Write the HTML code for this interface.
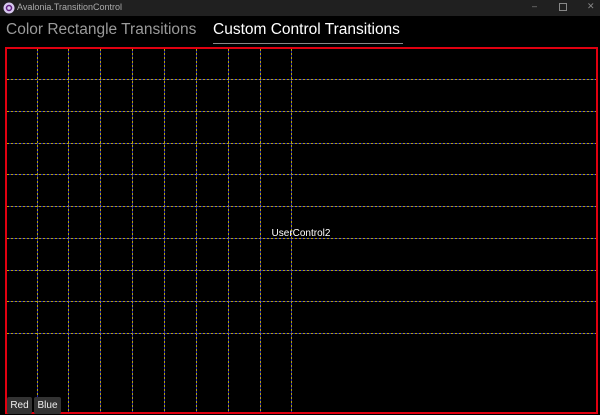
<!DOCTYPE html>
<html><head><style>
body{margin:0;width:600px;height:415px;background:#000;overflow:hidden;font-family:"Liberation Sans",sans-serif;position:relative}
.tb{position:absolute;left:0;top:0;width:600px;height:16px;background:#202020;color:#aaa;font-size:9px}
.tab{position:absolute;top:21px;font-size:15.5px;}
.btn{position:absolute;top:397px;height:17px;background:#333;color:#eee;font-size:10px;line-height:17px;text-align:center;border-radius:2px}
</style></head><body>
<div class="tb">
<svg width="12" height="12" style="position:absolute;left:3px;top:2px"><circle cx="6" cy="6" r="5.5" fill="#d8c8f0"/><circle cx="6" cy="6" r="2.5" fill="none" stroke="#602080" stroke-width="1.5"/></svg>
<span style="position:absolute;left:17px;top:2px">Avalonia.TransitionControl</span>
<span style="position:absolute;left:532px;top:1px;color:#888">–</span>
<span style="position:absolute;left:559px;top:3px;width:6px;height:6px;border:1px solid #888"></span>
<span style="position:absolute;left:587px;top:1px;color:#888">✕</span>
</div>
<div class="tab" style="left:6px;color:#9a9a9a">Color Rectangle Transitions</div>
<div class="tab" style="left:213px;color:#fff">Custom Control Transitions</div>
<div style="position:absolute;left:213px;top:43px;width:190px;height:1px;background:#888"></div>
<svg width="600" height="415" style="position:absolute;left:0;top:0">
<defs>
<path id="g" d="M37.5 49V413M68.5 49V413M100.5 49V413M132.5 49V413M164.5 49V413M196.5 49V413M228.5 49V413M260.5 49V413M291.5 49V413M7 79.5H597M7 111.5H597M7 143.5H597M7 174.5H597M7 206.5H597M7 238.5H597M7 270.5H597M7 301.5H597M7 333.5H597"/>
</defs>
<use href="#g" stroke="#2020b0" stroke-width="1"/>
<use href="#g" stroke="#b8a800" stroke-width="1" stroke-dasharray="2,2"/>
<rect x="6" y="48" width="591" height="365" fill="none" stroke="#e00010" stroke-width="2"/>
<text x="301" y="236" fill="#fff" font-size="10" text-anchor="middle" font-family="Liberation Sans">UserControl2</text>
</svg>
<div class="btn" style="left:7px;width:25px">Red</div>
<div class="btn" style="left:34px;width:27px">Blue</div>
</body></html>
